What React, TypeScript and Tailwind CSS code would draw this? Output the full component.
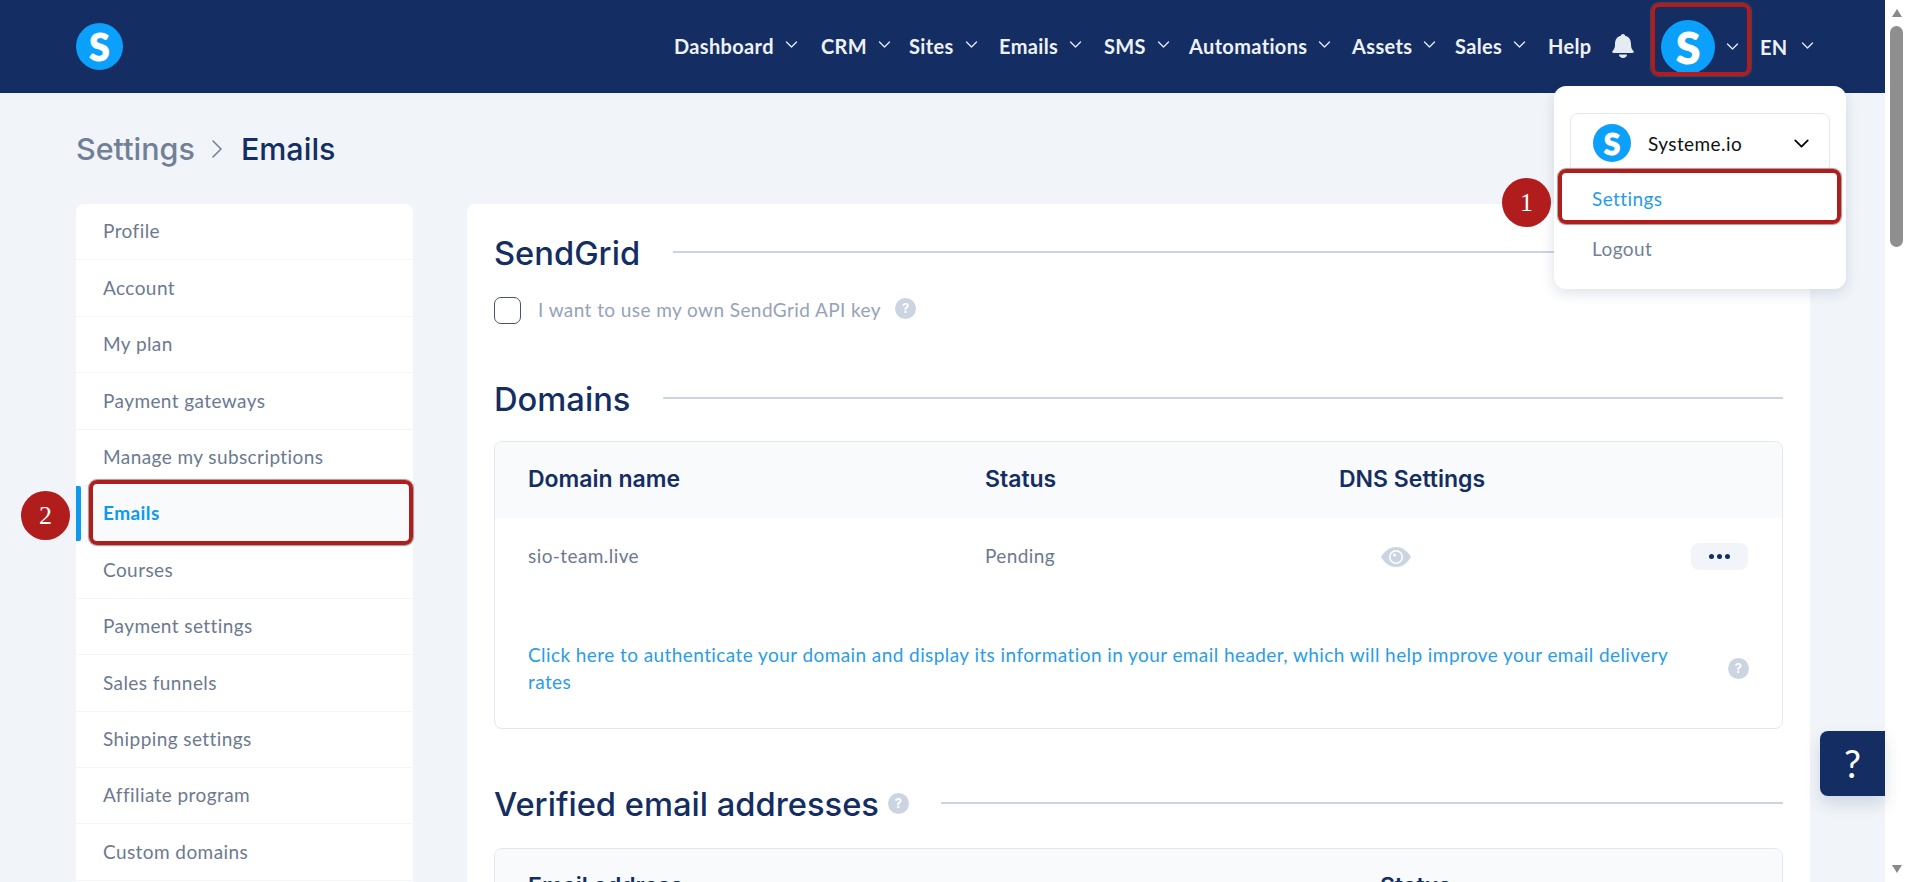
import React from "react";

const sofia = "font-['Lato','Open_Sans',sans-serif] text-[19px] tracking-[0.42px]";

function Chevron({ className = "" }: { className?: string }) {
  return (
    <svg viewBox="0 0 12 7" fill="none" className={className} stroke="currentColor" strokeWidth="1.4" strokeLinecap="round" strokeLinejoin="round">
      <path d="M1 1l5 5 5-5" />
    </svg>
  );
}

function Logo({ size, text }: { size: string; text: string }) {
  return (
    <div className={`${size} ${text} shrink-0 rounded-full bg-[#0ba0fb] flex items-center justify-center text-white font-black font-['Lato',sans-serif] leading-none [-webkit-text-stroke:1px_white]`}>
      S
    </div>
  );
}

function NavItem({ label, width, chevron = true }: { label: string; width: string; chevron?: boolean }) {
  return (
    <div className={`${width} shrink-0 flex items-center gap-[11px] text-[20px] font-bold text-[#eef2f8] tracking-[0.35px] -translate-y-[1px] font-['Lato',sans-serif]`}>
      <span>{label}</span>
      {chevron && <Chevron className="w-[13px] h-[7px] text-[#dfe6f0] -translate-y-[1px]" />}
    </div>
  );
}

function Help({ className = "" }: { className?: string }) {
  return (
    <span className={`w-[21px] h-[21px] shrink-0 rounded-full bg-[#cbd5e1] text-white text-[13px] font-bold leading-none flex items-center justify-center font-['Inter',sans-serif] ${className}`}>
      ?
    </span>
  );
}

function SectionTitle({ title, help = false }: { title: string; help?: boolean }) {
  return (
    <div className="flex items-center">
      <h2 className="text-[32.7px] leading-[40px] font-medium text-[#142e63] font-['Inter',sans-serif] whitespace-nowrap">{title}</h2>
      {help && <Help className="ml-[9px]" />}
      <div className={`flex-1 h-[2px] bg-[#cbd5e1] -translate-y-[1px] ${help ? "ml-[32px]" : "ml-[33px]"}`} />
    </div>
  );
}

const menu = [
  "Profile",
  "Account",
  "My plan",
  "Payment gateways",
  "Manage my subscriptions",
  "Emails",
  "Courses",
  "Payment settings",
  "Sales funnels",
  "Shipping settings",
  "Affiliate program",
  "Custom domains",
  "Tracking",
];

function Badge({ n, className }: { n: string; className: string }) {
  return (
    <div className={`absolute w-[49px] h-[49px] rounded-full bg-[#b11c1c] text-white text-[26px] font-['Liberation_Serif',serif] flex items-center justify-center ${className}`}>
      {n}
    </div>
  );
}

export default function App() {
  return (
    <div className="relative w-[1908px] h-[882px] overflow-hidden flex bg-white">
      <div className="w-[1885px] h-full flex flex-col bg-[#f1f5f9] overflow-hidden">
        <header className="h-[93px] shrink-0 bg-[#142e63] flex items-center pl-[76px]">
          <Logo size="w-[47px] h-[47px]" text="text-[37px]" />
          <nav className="ml-[551px] flex items-center">
            <NavItem label="Dashboard" width="w-[147px]" />
            <NavItem label="CRM" width="w-[88px]" />
            <NavItem label="Sites" width="w-[90px]" />
            <NavItem label="Emails" width="w-[105px]" />
            <NavItem label="SMS" width="w-[85px]" />
            <NavItem label="Automations" width="w-[163px]" />
            <NavItem label="Assets" width="w-[103px]" />
            <NavItem label="Sales" width="w-[93px]" />
            <NavItem label="Help" width="w-[64px]" chevron={false} />
            <svg viewBox="0 0 22 24" className="w-[22px] h-[24px] fill-[#e6ebf2] shrink-0 -translate-y-[1px]">
              <path d="M11 0c1.100 0 2 .8 2.100 1.800C17.500 2.800 19 6.300 19 10.300c0 3.200.6 4.900 2.400 6.600.8.800.4 2.100-.8 2.100H1.400c-1.200 0-1.600-1.300-.8-2.100C2.400 15.200 3 13.500 3 10.300c0-4 1.500-7.500 5.900-8.500C9 .8 9.900 0 11 0z" />
              <path d="M7 20.500h8c0 2-1.800 3.500-4 3.500s-4-1.500-4-3.500z" />
            </svg>
            <div className="ml-[27px] flex items-center">
              <Logo size="w-[54px] h-[54px]" text="text-[44px]" />
              <Chevron className="ml-[11px] w-[13px] h-[7px] text-[#dfe6f0]" />
            </div>
            <div className="ml-[21px] flex items-center gap-[13px] text-[20px] font-bold text-[#eef2f8] tracking-[0.3px] font-['Lato',sans-serif]">
              <span>EN</span>
              <Chevron className="w-[13px] h-[7px] text-[#dfe6f0] -translate-y-[1px]" />
            </div>
          </nav>
        </header>

        <main className="pl-[76px] pr-[75px] flex-1 min-h-0">
          <div className="h-[111px] flex items-center text-[30.5px] font-medium font-['Inter',sans-serif]">
            <span className="text-[#718096]">Settings</span>
            <svg viewBox="0 0 12 20" fill="none" stroke="#718096" strokeWidth="1.6" strokeLinecap="round" strokeLinejoin="round" className="w-[12px] h-[20px] ml-[16px] mr-[18px]">
              <path d="M2 2l8 8-8 8" />
            </svg>
            <span className="text-[#142e63]">Emails</span>
          </div>

          <div className="flex items-start gap-[54px]">
            <aside className="w-[337px] shrink-0 bg-white rounded-[8px]">
              {menu.map((m) => {
                const active = m === "Emails";
                return (
                  <div
                    key={m}
                    className={`relative h-[56.4px] flex items-center pl-[27px] border-b border-[#f3f5f8] ${sofia} ${
                      active ? "bg-[#f9fafb] text-[#0d9aee] font-bold" : "text-[#6b7a90]"
                    }`}
                  >
                    {active && <div className="absolute left-0 top-0 bottom-0 w-[5px] bg-[#0d9aee] rounded-r-[2px]" />}
                    {m}
                  </div>
                );
              })}
            </aside>

            <section className="flex-1 bg-white rounded-[8px] px-[27px] pt-[29px]">
              <SectionTitle title="SendGrid" />
              <div className="mt-[23px] flex items-center">
                <div className="w-[27px] h-[27px] rounded-[7px] border border-[#4a5568] bg-white" />
                <span className={`ml-[17px] text-[#94a3b8] ${sofia}`}>I want to use my own SendGrid API key</span>
                <Help className="ml-[14px] -translate-y-[2px]" />
              </div>

              <div className="mt-[54px]">
                <SectionTitle title="Domains" />
              </div>

              <div className="mt-[22px] border border-[#e2e8f0] rounded-[8px] overflow-hidden">
                <div className="h-[76px] bg-[#f9fafb] grid grid-cols-[457px_354px_1fr] items-center pl-[33px] text-[23px] font-semibold text-[#142e63] font-['Inter',sans-serif]">
                  <span>Domain name</span>
                  <span>Status</span>
                  <span>DNS Settings</span>
                </div>
                <div className={`h-[78px] grid grid-cols-[457px_396px_310px_1fr] items-center pl-[33px] text-[#6b7a90] ${sofia}`}>
                  <span>sio-team.live</span>
                  <span>Pending</span>
                  <svg viewBox="0 0 30 20" className="w-[30px] h-[20px]">
                    <path d="M15 0C8 0 3 5 0 10c3 5 8 10 15 10s12-5 15-10C27 5 22 0 15 0z" fill="#cbd5e1" />
                    <circle cx="15" cy="10" r="7" fill="#fff" />
                    <circle cx="15" cy="10" r="5.500" fill="#cbd5e1" />
                    <circle cx="13.500" cy="8" r="1.500" fill="#fff" />
                  </svg>
                  <div className="w-[57px] h-[27px] rounded-[8px] bg-[#f1f5f9] flex items-center justify-center gap-[3px]">
                    <i className="w-[5px] h-[5px] rounded-full bg-[#142e63]" />
                    <i className="w-[5px] h-[5px] rounded-full bg-[#142e63]" />
                    <i className="w-[5px] h-[5px] rounded-full bg-[#142e63]" />
                  </div>
                </div>
                <div className="h-[132px] pl-[33px] pr-[33px] pt-[45px] flex items-start">
                  <a className={`w-[1150px] !leading-[27.5px] text-[#2a9ce8] ${sofia}`}>
                    Click here to authenticate your domain and display its information in your email header, which will help improve your email delivery rates
                  </a>
                  <Help className="ml-auto mt-[17px]" />
                </div>
              </div>

              <div className="mt-[55px]">
                <SectionTitle title="Verified email addresses" help />
              </div>

              <div className="mt-[24px] border border-[#e2e8f0] rounded-[8px] overflow-hidden">
                <div className="h-[76px] bg-[#f9fafb] grid grid-cols-[852px_1fr] items-center pl-[33px] text-[23px] font-semibold text-[#142e63] font-['Inter',sans-serif]">
                  <span>Email address</span>
                  <span>Status</span>
                </div>
              </div>
            </section>
          </div>
        </main>
      </div>

      {/* scrollbar */}
      <div className="w-[23px] h-full bg-white flex flex-col items-center justify-between py-[9px]">
        <div className="w-0 h-0 border-x-[5px] border-x-transparent border-b-[8px] border-b-[#8a8a8a]" />
        <div className="w-[13px] h-[221px] mb-auto mt-[9px] rounded-full bg-[#8f8f8f]" />
        <div className="w-0 h-0 border-x-[5px] border-x-transparent border-t-[8px] border-t-[#8a8a8a]" />
      </div>

      {/* overlays */}
      <div className="absolute left-[1651px] top-[3px] w-[100px] h-[73px] rounded-[8px] border-[4px] border-[#b11c1c] shadow-[0_0_1px_1px_rgba(90,90,90,0.6)]" />

      <div className="absolute left-[1554px] top-[86px] w-[292px] h-[203px] rounded-[12px] bg-white shadow-[0_4px_14px_rgba(20,46,99,0.14)] px-[16px] pt-[27px]">
        <div className="h-[60px] rounded-[8px] border border-[#e2e8f0] flex items-center pl-[22px] pr-[20px]">
          <Logo size="w-[38px] h-[38px]" text="text-[30px]" />
          <span className={`ml-[17px] !text-[#111] translate-y-[1px] ${sofia}`}>Systeme.io</span>
          <Chevron className="ml-auto w-[15px] h-[9px] text-black" />
        </div>
        <div className={`mt-[13px] pl-[22px] !leading-[26px] text-[#1f9cf0] ${sofia}`}>Settings</div>
        <div className={`mt-[24px] pl-[22px] !leading-[26px] text-[#718096] ${sofia}`}>Logout</div>
      </div>

      <div className="absolute left-[1558px] top-[169px] w-[283px] h-[55px] rounded-[8px] border-[4px] border-[#b11c1c] shadow-[0_0_1px_1px_rgba(90,90,90,0.6)]" />
      <Badge n="1" className="left-[1502px] top-[178px]" />

      <div className="absolute left-[89px] top-[480px] w-[324px] h-[65px] rounded-[8px] border-[4px] border-[#b11c1c] shadow-[0_0_1px_1px_rgba(90,90,90,0.6)]" />
      <Badge n="2" className="left-[21px] top-[491px]" />

      <div className="absolute left-[1820px] top-[731px] w-[65px] h-[65px] rounded-l-[8px] bg-[#142e63] shadow-[0_8px_16px_rgba(20,46,99,0.15)] flex items-center justify-center text-white text-[38px] font-['Lato',sans-serif]">
        ?
      </div>
    </div>
  );
}
